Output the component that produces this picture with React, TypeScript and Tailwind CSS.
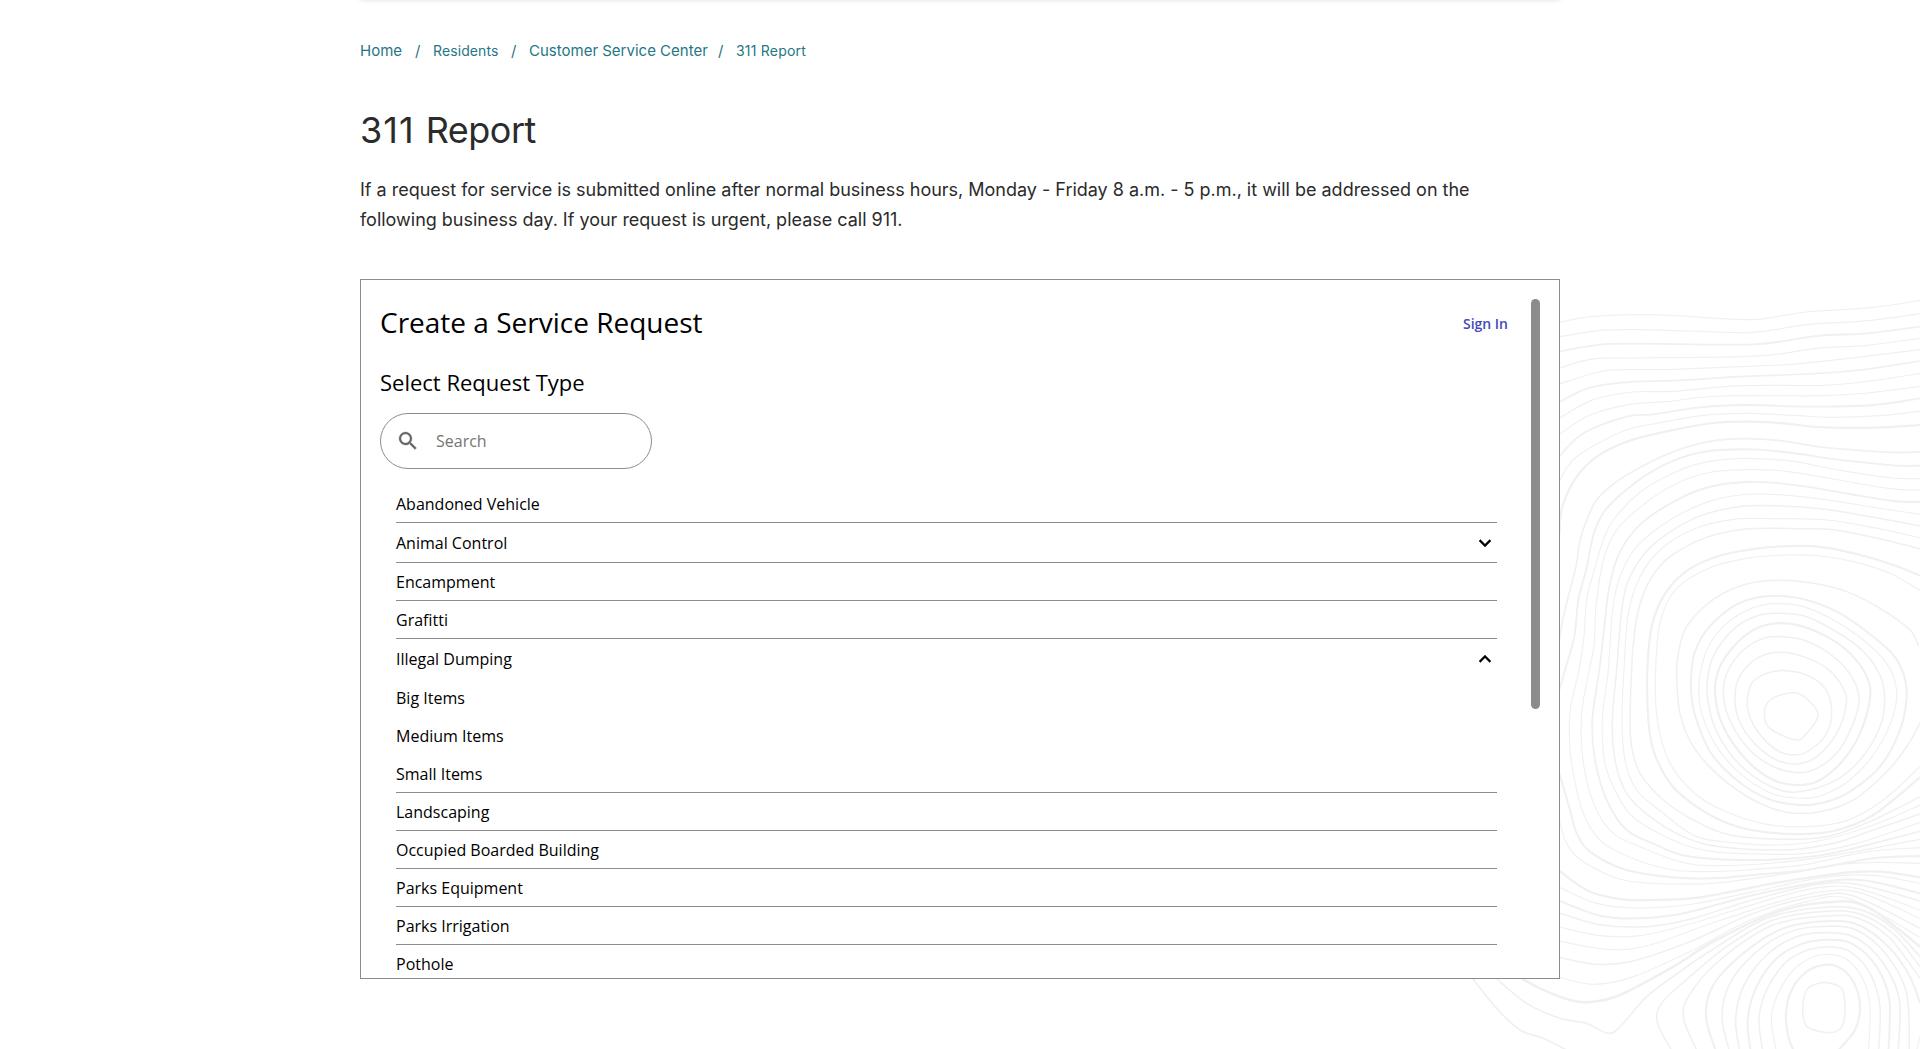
import React from "react";

type Contour = { p: number[]; w?: number; closed?: boolean };

const THIN = 3;
const MID = 4.5;
const THICK = 6;

const contours: Contour[] = [
  { p: [60, 97, 150, 80, 300, 74, 430, 78, 530, 85, 655, 88, 800, 66, 1000, 52, 1140, 31] },
  { p: [60, 140, 180, 121, 300, 119, 450, 123, 640, 127, 800, 104, 980, 92, 1140, 71] },
  { p: [60, 184, 180, 164, 300, 161, 640, 163, 830, 138, 980, 130, 1140, 110], w: 5 },
  { p: [60, 234, 150, 208, 250, 204, 500, 202, 680, 196, 830, 175, 980, 166, 1140, 145] },
  { p: [60, 281, 190, 243, 300, 239, 400, 238, 600, 230, 750, 223, 900, 208, 1140, 179] },
  { p: [60, 335, 150, 293, 280, 275, 400, 272, 600, 260, 800, 252, 960, 240, 1140, 213], w: MID },
  { p: [60, 383, 160, 329, 280, 306, 400, 304, 600, 287, 850, 286, 1000, 272, 1140, 250] },
  { p: [60, 432, 150, 375, 270, 343, 380, 335, 540, 318, 850, 317, 1000, 307, 1140, 289] },
  { p: [60, 497, 130, 430, 260, 380, 340, 373, 480, 352, 620, 345, 820, 350, 1000, 345, 1140, 325], w: 5 },
  { p: [60, 570, 110, 500, 250, 423, 340, 402, 490, 376, 620, 370, 760, 376, 870, 382, 1020, 377, 1140, 364] },
  { p: [58, 735, 67, 650, 110, 560, 170, 500, 260, 455, 380, 424, 520, 399, 640, 395, 740, 401, 830, 411, 1000, 413, 1140, 405], w: THICK },
  { p: [1140, 486, 1050, 487, 930, 479, 840, 471, 720, 452, 610, 446, 510, 454, 420, 478, 320, 522, 230, 575, 170, 630, 140, 690, 118, 760, 110, 820, 90, 900, 68, 990, 58, 1050], w: MID },
  { p: [1140, 527, 1060, 526, 870, 506, 780, 492, 660, 479, 540, 480, 460, 492, 380, 521, 290, 575, 200, 655, 165, 720, 148, 790, 140, 835, 115, 930, 103, 1040, 75, 1140, 58, 1200], w: 5 },
  { p: [1140, 566, 1060, 564, 900, 541, 760, 514, 610, 505, 490, 518, 400, 549, 300, 607, 220, 690, 190, 750, 160, 850, 140, 930, 132, 1040, 117, 1140, 92, 1250, 88, 1340, 98, 1440, 130, 1570, 185, 1655, 290, 1710, 400, 1740, 500, 1745, 620, 1740, 800, 1723, 980, 1685, 1140, 1673] },
  { p: [1140, 600, 1050, 596, 880, 567, 740, 544, 620, 539, 500, 549, 390, 590, 300, 652, 230, 720, 190, 810, 168, 950, 163, 1060, 148, 1140, 125, 1270, 130, 1420, 165, 1550, 220, 1630, 300, 1670, 420, 1715, 520, 1727, 700, 1719, 880, 1696, 1140, 1648] },
  { p: [1140, 636, 1060, 633, 930, 612, 800, 590, 700, 578, 620, 576, 520, 588, 430, 620, 310, 695, 240, 785, 208, 890, 192, 1020, 178, 1140, 157, 1290, 165, 1410, 200, 1530, 260, 1620, 350, 1665, 440, 1698, 600, 1710, 760, 1705, 900, 1685, 1140, 1624], w: 5 },
  { p: [1140, 673, 1000, 652, 850, 628, 700, 613, 600, 615, 500, 637, 390, 690, 290, 770, 240, 860, 218, 960, 205, 1140, 187, 1290, 195, 1420, 235, 1520, 290, 1590, 420, 1660, 520, 1685, 650, 1692, 800, 1690, 950, 1660, 1140, 1597] },
  { p: [1140, 708, 1000, 682, 850, 657, 700, 647, 590, 651, 470, 682, 350, 755, 280, 840, 248, 940, 230, 1140, 217, 1290, 225, 1410, 260, 1510, 330, 1580, 430, 1640, 540, 1670, 740, 1680, 880, 1660, 1000, 1620, 1140, 1572], w: 4 },
  { p: [1140, 743, 1000, 713, 860, 690, 700, 686, 580, 688, 460, 718, 360, 780, 300, 860, 265, 970, 252, 1140, 246, 1290, 255, 1410, 290, 1500, 370, 1570, 470, 1640, 600, 1660, 720, 1665, 850, 1650, 1000, 1605, 1140, 1545] },
  { p: [1140, 776, 1000, 742, 880, 719, 780, 716, 620, 717, 500, 742, 390, 800, 330, 870, 295, 960, 280, 1060, 275, 1140, 270, 1290, 275, 1370, 300, 1450, 370, 1530, 460, 1590, 570, 1635, 740, 1648, 870, 1638, 1000, 1590, 1140, 1520], w: 4 },
  { p: [1140, 857, 1060, 825, 950, 792, 850, 772, 760, 768, 640, 777, 520, 803, 430, 850, 370, 920, 335, 1010, 322, 1140, 325, 1290, 340, 1380, 380, 1465, 430, 1520, 520, 1580, 620, 1617, 760, 1632, 880, 1623, 1000, 1575, 1140, 1462], w: THICK },
  { p: [1140, 902, 1050, 850, 940, 815, 840, 798, 740, 795, 620, 805, 510, 833, 410, 895, 362, 990, 347, 1140, 352, 1290, 390, 1420, 470, 1515, 570, 1570, 680, 1603, 800, 1610, 920, 1592, 1030, 1530, 1140, 1430] },
  { p: [1136, 1070, 1110, 1020, 1020, 955, 920, 905, 820, 880, 720, 871, 620, 882, 520, 928, 440, 1010, 415, 1090, 410, 1150, 420, 1270, 460, 1370, 540, 1460, 640, 1530, 740, 1567, 840, 1565, 940, 1530, 1040, 1445, 1100, 1370, 1140, 1300], w: 4 },

  { p: [455, 1140, 465, 1085, 500, 1020, 570, 955, 640, 925, 710, 917, 800, 930, 900, 970, 1000, 1040, 1060, 1095, 1090, 1150, 1100, 1220, 1080, 1320, 1020, 1430, 930, 1505, 860, 1535, 780, 1545, 680, 1525, 590, 1470, 510, 1385, 465, 1275, 453, 1200], w: 5.5, closed: true },
  { p: [483, 1140, 505, 1070, 560, 1000, 640, 953, 710, 941, 790, 950, 880, 990, 970, 1050, 1040, 1120, 1068, 1190, 1062, 1270, 1010, 1380, 930, 1470, 840, 1518, 770, 1524, 690, 1508, 600, 1450, 530, 1370, 485, 1270, 476, 1190], closed: true },
  { p: [507, 1140, 530, 1080, 590, 1010, 660, 975, 720, 970, 800, 980, 880, 1020, 960, 1075, 1015, 1145, 1034, 1220, 1020, 1310, 960, 1410, 880, 1475, 770, 1506, 690, 1488, 600, 1425, 530, 1325, 502, 1220], w: 4, closed: true },
  { p: [540, 1130, 590, 1060, 650, 1015, 710, 1000, 780, 1007, 860, 1040, 930, 1090, 980, 1160, 990, 1225, 960, 1330, 910, 1410, 840, 1470, 780, 1485, 700, 1470, 620, 1410, 550, 1310, 525, 1210], w: THICK, closed: true },
  { p: [565, 1140, 610, 1080, 670, 1045, 725, 1040, 790, 1050, 860, 1085, 925, 1145, 957, 1220, 940, 1300, 890, 1390, 820, 1440, 760, 1447, 690, 1425, 620, 1370, 565, 1280, 550, 1200], w: 4, closed: true },
  { p: [612, 1140, 660, 1100, 720, 1087, 790, 1100, 865, 1138, 912, 1200, 918, 1250, 890, 1330, 830, 1400, 770, 1422, 700, 1405, 630, 1345, 590, 1270, 588, 1190], w: 4, closed: true },
  { p: [735, 1142, 800, 1155, 855, 1195, 875, 1260, 860, 1330, 810, 1380, 765, 1395, 710, 1380, 650, 1320, 622, 1250, 635, 1180, 680, 1150], w: 4, closed: true },
  { p: [750, 1208, 790, 1218, 830, 1260, 830, 1290, 800, 1330, 778, 1350, 735, 1340, 685, 1310, 673, 1270, 690, 1230], w: 4, closed: true },

  { p: [58, 1450, 90, 1560, 110, 1630, 150, 1685, 250, 1737, 380, 1760, 520, 1765, 640, 1755, 800, 1740, 1000, 1705, 1140, 1698], w: 5.5 },
  { p: [58, 1590, 80, 1660, 130, 1715, 250, 1770, 400, 1782, 540, 1778, 760, 1748, 900, 1723, 1020, 1717, 1140, 1720] },
  { p: [58, 1743, 150, 1805, 250, 1828, 330, 1830, 480, 1822, 700, 1780, 900, 1750, 1020, 1745, 1140, 1762], w: THICK },
  { p: [58, 1792, 170, 1840, 300, 1854, 460, 1842, 640, 1805, 850, 1762, 1000, 1756, 1140, 1780] },
  { p: [58, 1832, 180, 1877, 300, 1885, 440, 1868, 640, 1815, 850, 1775, 980, 1772, 1140, 1810], w: 5.5 },
  { p: [58, 1869, 180, 1904, 320, 1910, 450, 1888, 620, 1835, 820, 1785, 950, 1783, 1140, 1833], w: 4 },
  { p: [58, 1911, 180, 1937, 300, 1937, 450, 1902, 650, 1840, 820, 1795, 950, 1795, 1140, 1860] },
  { p: [58, 1953, 200, 1978, 320, 1968, 500, 1905, 700, 1840, 850, 1805, 960, 1808, 1140, 1885] },
  { p: [58, 2002, 170, 2023, 280, 2013, 450, 1955, 640, 1870, 820, 1820, 940, 1818, 1140, 1915], w: 4 },
  { p: [58, 2062, 160, 2083, 280, 2060, 460, 1980, 620, 1895, 800, 1835, 930, 1827, 1140, 1942] },
  { p: [-60, 2062, 0, 2095, 90, 2130, 150, 2136, 240, 2115, 400, 2030, 520, 1955, 700, 1870, 860, 1837, 980, 1850, 1140, 1970], w: 7 },
  { p: [-135, 2062, -40, 2140, 60, 2185, 140, 2200, 205, 2230, 245, 2205, 320, 2120, 420, 2045, 500, 1990, 680, 1885, 860, 1851, 970, 1862, 1060, 1915, 1140, 2000], w: 4.5 },
  { p: [-205, 2062, -130, 2155, -60, 2220, 10, 2245, 80, 2280], w: 4.5 },

  { p: [860, 2078, 905, 2095, 915, 2150, 908, 2205, 880, 2227, 830, 2222, 797, 2205, 788, 2150, 800, 2100, 825, 2083], w: 4, closed: true },
  { p: [765, 2290, 745, 2240, 738, 2170, 755, 2100, 800, 2045, 862, 2024, 910, 2040, 945, 2085, 960, 2150, 945, 2220, 895, 2280], w: THICK },
  { p: [710, 2290, 694, 2190, 710, 2120, 760, 2040, 820, 2000, 865, 1993, 920, 2008, 970, 2070, 990, 2150, 985, 2290] },
  { p: [670, 2290, 657, 2190, 680, 2100, 740, 2015, 810, 1978, 870, 1971, 930, 1985, 990, 2050, 1020, 2150, 1015, 2290], w: 4 },
  { p: [633, 2290, 623, 2190, 650, 2090, 710, 2005, 790, 1960, 870, 1949, 940, 1963, 1010, 2030, 1048, 2130, 1045, 2290], w: 5.5 },
  { p: [600, 2290, 587, 2190, 610, 2090, 680, 1995, 770, 1940, 865, 1928, 950, 1945, 1030, 2020, 1078, 2130, 1074, 2290], w: 4.5 },
  { p: [570, 2290, 546, 2180, 570, 2080, 650, 1985, 750, 1925, 860, 1909, 950, 1920, 1040, 1995, 1100, 2110, 1108, 2290], w: 4 },
  { p: [530, 2290, 498, 2180, 520, 2085, 610, 1990, 730, 1915, 870, 1893, 960, 1907, 1050, 1975, 1110, 2060, 1140, 2140], w: 5.5 },
  { p: [475, 2290, 432, 2190, 445, 2120, 540, 2010, 700, 1905, 870, 1877, 960, 1887, 1050, 1945, 1140, 2065], w: 4 },
  { p: [400, 2290, 353, 2200, 365, 2140, 450, 2060, 560, 1970, 700, 1890, 860, 1864, 960, 1872, 1060, 1932, 1140, 2030], w: 4 },
  { p: [1128, 2290, 1140, 2240] },
];

/** Smooth curve through the given points (Catmull-Rom expressed as cubic Béziers). */
function curve({ p, closed }: Contour) {
  const n = p.length / 2;
  const at = (i: number) => {
    const k = closed ? (i + n) % n : Math.min(n - 1, Math.max(0, i));
    return [p[2 * k], p[2 * k + 1]];
  };
  let d = `M${p[0]} ${p[1]}`;
  for (let i = 0; i < (closed ? n : n - 1); i++) {
    const [a, b, c, e] = [at(i - 1), at(i), at(i + 1), at(i + 2)];
    const x1 = b[0] + (c[0] - a[0]) / 6;
    const y1 = b[1] + (c[1] - a[1]) / 6;
    const x2 = c[0] - (e[0] - b[0]) / 6;
    const y2 = c[1] - (e[1] - b[1]) / 6;
    d += `C${x1.toFixed(1)} ${y1.toFixed(1)} ${x2.toFixed(1)} ${y2.toFixed(1)} ${c[0]} ${c[1]}`;
  }
  return d;
}

function Topography() {
  return (
    <svg
      className="pointer-events-none absolute right-0 bottom-0 h-[759px] w-[480px]"
      viewBox="-300 0 1440 2277"
      fill="none"
      stroke="#f0f0f0"
      aria-hidden="true"
    >
      {contours.map((c, i) => (
        <path key={i} d={curve(c)} strokeWidth={(c.w ?? THIN) + 0.5} />
      ))}
    </svg>
  );
}

type Row = { label: string; chevron?: "down" | "up"; line: boolean };

const rows: Row[] = [
  { label: "Abandoned Vehicle", line: true },
  { label: "Animal Control", chevron: "down", line: true },
  { label: "Encampment", line: true },
  { label: "Grafitti", line: true },
  { label: "Illegal Dumping", chevron: "up", line: false },
  { label: "Big Items", line: false },
  { label: "Medium Items", line: false },
  { label: "Small Items", line: true },
  { label: "Landscaping", line: true },
  { label: "Occupied Boarded Building", line: true },
  { label: "Parks Equipment", line: true },
  { label: "Parks Irrigation", line: true },
  { label: "Pothole", line: true },
];

function Chevron({ dir }: { dir: "down" | "up" }) {
  return (
    <svg className="h-6 w-6" viewBox="0 0 24 24" fill="#000" stroke="#000" strokeWidth="0.4">
      {dir === "down" ? (
        <path d="M7.41 8.59 12 13.17l4.59-4.58L18 10l-6 6-6-6z" />
      ) : (
        <path d="M7.41 15.41 12 10.83l4.59 4.58L18 14l-6-6-6 6z" />
      )}
    </svg>
  );
}

function RequestPanel() {
  return (
    <section className="relative mt-[44px] flex h-[700px] w-[1200px] overflow-hidden border border-[#8c8c8c] bg-white font-['Open_Sans',sans-serif] text-black">
      <div className="w-[1147px] pl-[19px]">
        <div className="flex items-center justify-between pt-[22px]">
          <h2 className="h-[40px] text-[28px] leading-[40px] whitespace-nowrap">Create a Service Request</h2>
          <a className="pt-1 text-[14px] leading-5 font-semibold text-[#414ab8]">Sign In</a>
        </div>
        <h3 className="mt-[25px] h-[30px] text-[22px] leading-[30px] whitespace-nowrap">Select Request Type</h3>
        <div className="mt-[16px] flex h-[56px] w-[272px] items-center rounded-full border border-[#8c8c8c] pl-[15px]">
          <svg className="h-6 w-6" viewBox="0 0 24 24" fill="#666" stroke="#666" strokeWidth="0.3">
            <path d="M15.5 14h-.79l-.28-.27A6.471 6.471 0 0 0 16 9.5 6.5 6.5 0 1 0 9.5 16c1.61 0 3.09-.59 4.23-1.57l.27.28v.79l5 4.99L20.49 19l-4.99-5zm-6 0C7.01 14 5 11.99 5 9.5S7.01 5 9.5 5 14 7.01 14 9.5 11.99 14 9.5 14z" />
          </svg>
          <span className="ml-4 text-[16px] leading-6 text-[#757575]">Search</span>
        </div>
        <ul className="mt-4 ml-4 w-[1101px]">
          {rows.map((r) => (
            <li
              key={r.label}
              className={[
                "flex items-center justify-between border-b text-[16px]",
                r.chevron ? "h-[40px]" : "h-[38px]",
                r.line ? "border-[#8c8c8c]" : "border-transparent",
              ].join(" ")}
            >
              <span>{r.label}</span>
              {r.chevron && <Chevron dir={r.chevron} />}
            </li>
          ))}
        </ul>
      </div>
      <div className="mt-[19px] ml-[23px] h-[410px] w-[9px] rounded-full bg-[#8c8c8c]" />
    </section>
  );
}

export default function App() {
  return (
    <div className="relative h-[1049px] w-[1920px] overflow-hidden bg-white font-['Inter',sans-serif] text-[#2b2b2b] antialiased">
      <Topography />
      <div className="relative ml-[360px] w-[1200px]">
        <div className="absolute -top-2 left-0 h-2 w-full shadow-[0_0_5px_rgba(0,0,0,0.13)]" />
        <nav className="flex h-[102px] items-baseline pt-[40px] leading-[22px] whitespace-nowrap text-[#1f7685]">
          <a className="w-[55px] text-[15px]">Home</a>
          <span className="w-[18px] text-[15px]">/</span>
          <a className="w-[78px] text-[14px] tracking-[0.1px]">Residents</a>
          <span className="w-[18px] text-[15px]">/</span>
          <a className="w-[189px] text-[15px]">Customer Service Center</a>
          <span className="w-[18px] text-[15px]">/</span>
          <a className="text-[14px] tracking-[0.2px]">311 Report</a>
        </nav>
        <h1 className="mt-[6px] h-[44px] text-[36px] leading-[44px] tracking-[-0.5px] whitespace-nowrap">
          <span className="tracking-[1px]">311 </span>Report
        </h1>
        <p className="mt-[23px] h-[60px] text-[18px] leading-[30px] tracking-[-0.01px] whitespace-nowrap">
          If a request for service is submitted online after normal business hours, Monday - Friday 8 a.m. - 5 p.m., it will be addressed on the
          <br />
          following business day. If your request is urgent, please call 911.
        </p>
        <RequestPanel />
      </div>
    </div>
  );
}
